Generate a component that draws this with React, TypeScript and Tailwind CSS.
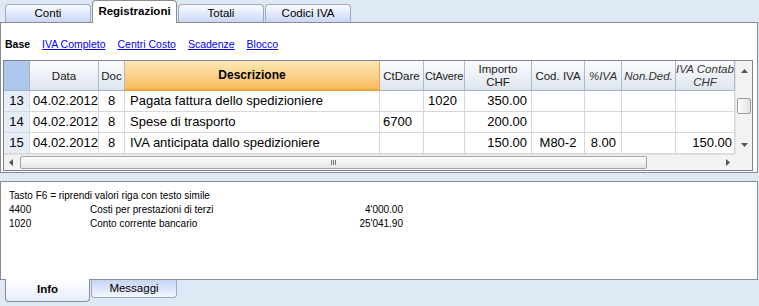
import React from "react";

const cols =
  "grid grid-cols-[26px_69px_26px_255px_44px_41px_67px_53px_37px_54px_59px]";

type Row = {
  n: number;
  data: string;
  doc: string;
  desc: string;
  dare: string;
  avere: string;
  importo: string;
  cod: string;
  iva: string;
  nonDed: string;
  contab: string;
};

const rows: Row[] = [
  { n: 13, data: "04.02.2012", doc: "8", desc: "Pagata fattura dello spedizioniere", dare: "", avere: "1020", importo: "350.00", cod: "", iva: "", nonDed: "", contab: "" },
  { n: 14, data: "04.02.2012", doc: "8", desc: "Spese di trasporto", dare: "6700", avere: "", importo: "200.00", cod: "", iva: "", nonDed: "", contab: "" },
  { n: 15, data: "04.02.2012", doc: "8", desc: "IVA anticipata dallo spedizioniere", dare: "", avere: "", importo: "150.00", cod: "M80-2", iva: "8.00", nonDed: "", contab: "150.00" },
];

const infoLines = [
  { code: "4400", desc: "Costi per prestazioni di terzi", amount: "4'000.00" },
  { code: "1020", desc: "Conto corrente bancario", amount: "25'041.90" },
];

const Arrow = ({ dir }: { dir: "up" | "down" | "left" | "right" }) => {
  const pts = {
    up: "0,4 3.5,0 7,4",
    down: "0,0 3.5,4 7,0",
    left: "4,0 0,3.5 4,7",
    right: "0,0 4,3.5 0,7",
  }[dir];
  const vertical = dir === "up" || dir === "down";
  return (
    <svg width={vertical ? 7 : 4} height={vertical ? 4 : 7} className="block">
      <polygon points={pts} fill="#555" />
    </svg>
  );
};

const TopTab = ({ label, active }: { label: string; active?: boolean }) =>
  active ? (
    <div className="relative z-10 h-[23px] w-[85px] rounded-t-[4px] border border-b-0 border-[#8c8c8c] bg-white flex items-center justify-center pb-[1px] text-[11.5px] font-bold text-black">
      {label}
    </div>
  ) : (
    <div className="mt-[4px] h-[18px] w-[86px] rounded-t-[4px] border border-b-0 border-[#9aa9c6] bg-linear-to-b from-[#fbfcff] to-[#c9d7f6] flex items-center justify-center text-[11.5px] text-black">
      {label}
    </div>
  );

const HeadCell = ({
  children,
  italic,
  className = "",
}: {
  children: React.ReactNode;
  italic?: boolean;
  className?: string;
}) => (
  <div
    className={`flex flex-col items-center justify-center overflow-hidden whitespace-nowrap border-r border-[#a9bbd3] border-b border-b-[#9fb3ce] bg-linear-to-b from-[#fbfcfe] to-[#dfe5ee] text-[11.5px] leading-[12px] text-[#1a1a1a] ${
      italic ? "italic text-[#333]" : ""
    } ${className}`}
  >
    {children}
  </div>
);

const Cell = ({
  children,
  className = "",
}: {
  children?: React.ReactNode;
  className?: string;
}) => (
  <div
    className={`flex items-center overflow-hidden whitespace-nowrap border-r border-b border-[#d8d8d8] text-[13px] text-black ${className}`}
  >
    {children}
  </div>
);

export default function App() {
  return (
    <div className="w-[759px] h-[306px] overflow-hidden bg-[#dee9f5] font-['Liberation_Sans',Arial,sans-serif] flex flex-col">
      {/* top tabs */}
      <div className="h-[22px] flex items-start pl-[5px] gap-[1px]">
        <TopTab label="Conti" />
        <TopTab label="Registrazioni" active />
        <TopTab label="Totali" />
        <TopTab label="Codici IVA" />
      </div>

      {/* main panel */}
      <div className="w-[758px] border border-[#8c8c8c] bg-white pl-[2px] pr-[4px] pb-[1px]">
        <div className="h-[37px] flex items-center gap-[12px] pt-[6px] pl-[2px] text-[10.5px]">
          <span className="font-bold text-black">Base</span>
          <span className="text-[#0000ee] underline">IVA Completo</span>
          <span className="text-[#0000ee] underline">Centri Costo</span>
          <span className="text-[#0000ee] underline">Scadenze</span>
          <span className="text-[#0000ee] underline">Blocco</span>
        </div>

        <div className="w-[750px] border border-[#7f8590]">
          <div className="flex">
            <div className="w-[731px]">
              <div className={`${cols} h-[30px]`}>
                <div className="bg-[#adc7ec] border-r border-b border-[#9fb3ce]" />
                <HeadCell>Data</HeadCell>
                <HeadCell>Doc</HeadCell>
                <div className="flex items-center justify-center border-r border-[#f0a440] border-b-2 border-b-[#f3a23a] bg-linear-to-b from-[#fde8b6] to-[#f7bb5a] text-[12px] font-bold text-black">
                  Descrizione
                </div>
                <HeadCell>CtDare</HeadCell>
                <HeadCell className="text-[11px] tracking-[-0.2px]">CtAvere</HeadCell>
                <HeadCell className="gap-[1px]">
                  <span>Importo</span>
                  <span>CHF</span>
                </HeadCell>
                <HeadCell>Cod. IVA</HeadCell>
                <HeadCell italic>%IVA</HeadCell>
                <HeadCell italic>Non.Ded.</HeadCell>
                <HeadCell italic className="gap-[1px]">
                  <span>IVA Contab</span>
                  <span>CHF</span>
                </HeadCell>
              </div>

              {rows.map((r) => (
                <div key={r.n} className={`${cols} h-[21px]`}>
                  <Cell className="justify-center bg-[#e5edf8] text-[11px]">{r.n}</Cell>
                  <Cell className="pl-[3px]">{r.data}</Cell>
                  <Cell className="justify-center">{r.doc}</Cell>
                  <Cell className="pl-[5px]">{r.desc}</Cell>
                  <Cell className="pl-[3px]">{r.dare}</Cell>
                  <Cell className="pl-[4px]">{r.avere}</Cell>
                  <Cell className="justify-end pr-[4px]">{r.importo}</Cell>
                  <Cell className="justify-center">{r.cod}</Cell>
                  <Cell className="justify-end pr-[5px]">{r.iva}</Cell>
                  <Cell className="justify-end pr-[4px]">{r.nonDed}</Cell>
                  <Cell className="justify-end pr-[2px]">{r.contab}</Cell>
                </div>
              ))}
            </div>

            {/* vertical scrollbar */}
            <div className="w-[17px] bg-[#f2f2f2] border-l border-[#e2e2e2] flex flex-col items-center">
              <div className="h-[18px] flex items-center justify-center mt-[1px]">
                <Arrow dir="up" />
              </div>
              <div className="mt-[18px] h-[16px] w-[14px] rounded-[2px] border border-[#9a9a9a] bg-linear-to-r from-[#fdfdfd] to-[#e2e2e2]" />
              <div className="flex-1" />
              <div className="h-[18px] flex items-center justify-center">
                <Arrow dir="down" />
              </div>
            </div>
          </div>

          {/* horizontal scrollbar */}
          <div className="flex h-[16px]">
            <div className="w-[731px] bg-[#f2f2f2] border-t border-[#e2e2e2] flex items-center">
              <div className="w-[14px] flex justify-center">
                <Arrow dir="left" />
              </div>
              <div className="ml-[2px] h-[13px] w-[627px] rounded-[2px] border border-[#a4a4a4] bg-linear-to-b from-[#fdfdfd] to-[#e4e4e4] flex items-center justify-center gap-[1px]">
                <div className="w-[1px] h-[5px] bg-[#777]" />
                <div className="w-[1px] h-[5px] bg-[#777]" />
                <div className="w-[1px] h-[5px] bg-[#777]" />
              </div>
              <div className="flex-1" />
              <div className="w-[14px] flex justify-center">
                <Arrow dir="right" />
              </div>
            </div>
            <div className="flex-1 bg-[#f2f2f2]" />
          </div>
        </div>
      </div>

      {/* info panel */}
      <div className="mt-[8px] w-[758px] h-[99px] border border-[#8c8c8c] bg-white pl-[8px] pt-[7px] text-[10px] leading-[14px] text-black">
        <div>Tasto F6 = riprendi valori riga con testo simile</div>
        {infoLines.map((l) => (
          <div key={l.code} className="flex">
            <span className="w-[81px]">{l.code}</span>
            <span className="w-[240px]">{l.desc}</span>
            <span className="w-[73px] text-right">{l.amount}</span>
          </div>
        ))}
      </div>

      {/* bottom tabs */}
      <div className="flex items-start pl-[5px] gap-[1px]">
        <div className="relative z-10 -mt-px h-[23px] w-[85px] rounded-b-[4px] border border-t-0 border-[#8c8c8c] bg-linear-to-b from-[#ffffff] to-[#e6ecf9] flex items-center justify-center text-[11.5px] font-bold text-black">
          Info
        </div>
        <div className="h-[18px] w-[86px] rounded-b-[4px] border border-t-0 border-[#9aa9c6] bg-linear-to-b from-[#c5d4f5] to-[#f4f7fe] flex items-center justify-center text-[11.5px] text-black">
          Messaggi
        </div>
      </div>
    </div>
  );
}
